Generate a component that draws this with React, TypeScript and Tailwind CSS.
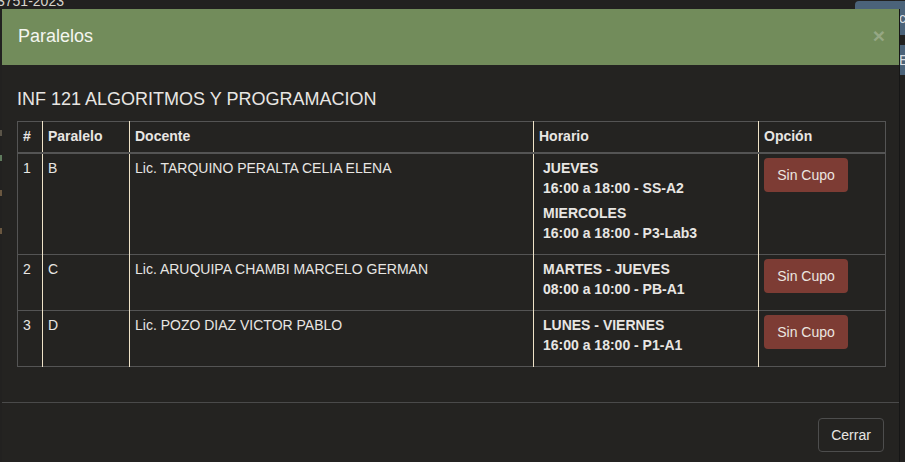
import React from 'react';

type Horario = { dia: string; hora: string };
type Fila = { n: number; paralelo: string; docente: string; horarios: Horario[] };

const filas: Fila[] = [
  {
    n: 1,
    paralelo: 'B',
    docente: 'Lic. TARQUINO PERALTA CELIA ELENA',
    horarios: [
      { dia: 'JUEVES', hora: '16:00 a 18:00 - SS-A2' },
      { dia: 'MIERCOLES', hora: '16:00 a 18:00 - P3-Lab3' },
    ],
  },
  {
    n: 2,
    paralelo: 'C',
    docente: 'Lic. ARUQUIPA CHAMBI MARCELO GERMAN',
    horarios: [{ dia: 'MARTES - JUEVES', hora: '08:00 a 10:00 - PB-A1' }],
  },
  {
    n: 3,
    paralelo: 'D',
    docente: 'Lic. POZO DIAZ VICTOR PABLO',
    horarios: [{ dia: 'LUNES - VIERNES', hora: '16:00 a 18:00 - P1-A1' }],
  },
];

const cell = 'pl-[5px] pr-[7px] pt-[4px] pb-[6px] align-top border-l border-l-[#efe3c8] first:border-l-0';

const App = () => {
  return (
    <div className="relative w-[905px] h-[462px] overflow-hidden bg-[#222120] text-[14px] leading-[20px] text-[#e8e6e3] font-['Liberation_Sans',Arial,sans-serif]">
      {/* page behind the modal */}
      <div className="absolute left-[-3px] top-[-9px] text-[14px] text-[#d8d4cc]">3751-2023</div>
      <div className="absolute left-[855px] top-[1px] w-[60px] h-[34px] rounded-tl-[4px] bg-[#4b637a] pl-[44px] pt-[7px] text-[#d8dde2]">cu</div>
      <div className="absolute left-[855px] top-[45px] w-[60px] h-[30px] bg-[#4b637a] pl-[44px] pt-[5px] text-[#d8dde2]">E</div>
      <div className="absolute left-0 top-[130px] w-[2px] h-[6px] bg-[#5a5448]" />
      <div className="absolute left-0 top-[155px] w-[2px] h-[6px] bg-[#5f7a5d]" />
      <div className="absolute left-0 top-[190px] w-[2px] h-[6px] bg-[#6a5740]" />
      <div className="absolute left-0 top-[228px] w-[2px] h-[6px] bg-[#6a5740]" />

      {/* modal */}
      <div className="absolute left-[2px] top-[9px] w-[898px] h-[470px] bg-[#242321] border-r border-r-[#161616]">
        <div className="flex items-center justify-between h-[56px] px-[16px] pb-[3px] bg-[#728c5b]">
          <h3 className="text-[18px] text-[#f4f6f0]">Paralelos</h3>
          <span className="text-[21px] font-bold leading-none text-[#95a784] mr-[-2px]">×</span>
        </div>

        <div className="px-[15px] pt-[15px] pb-[15px]">
          <h4 className="mt-[9px] mb-[12px] text-[18px] leading-[20px] text-[#e8e6e3]">
            INF 121 ALGORITMOS Y PROGRAMACION
          </h4>
          <table className="w-[868px] table-fixed border-collapse border border-[#545454] mb-[20px]">
            <colgroup>
              <col className="w-[25px]" />
              <col className="w-[87px]" />
              <col className="w-[404px]" />
              <col className="w-[225px]" />
              <col className="w-[127px]" />
            </colgroup>
            <thead>
              <tr className="border-b-2 border-b-[#545454] text-left font-bold">
                <th className={cell}>#</th>
                <th className={cell}>Paralelo</th>
                <th className={cell}>Docente</th>
                <th className={cell}>Horario</th>
                <th className={cell}>Opción</th>
              </tr>
            </thead>
            <tbody>
              {filas.map((f) => (
                <tr key={f.n} className="border-t border-t-[#545454]">
                  <td className={cell}>{f.n}</td>
                  <td className={cell}>{f.paralelo}</td>
                  <td className={cell}>{f.docente}</td>
                  <td className={cell + ' font-bold !pl-[9px]'}>
                    {f.horarios.map((h) => (
                      <div key={h.dia} className="mb-[5px]">
                        <div>{h.dia}</div>
                        <div>{h.hora}</div>
                      </div>
                    ))}
                  </td>
                  <td className={cell}>
                    <button className="h-[34px] w-[84px] rounded-[4px] bg-[#7d3c34] text-[#ece6e0]">
                      Sin Cupo
                    </button>
                  </td>
                </tr>
              ))}
            </tbody>
          </table>
        </div>

        <div className="flex justify-end border-t border-t-[#4a4a4a] px-[15px] pt-[15px]">
          <button className="h-[34px] w-[66px] rounded-[4px] border border-[#4d4d4d] text-[#e8e6e3]">
            Cerrar
          </button>
        </div>
      </div>
    </div>
  );
};

export default App;
